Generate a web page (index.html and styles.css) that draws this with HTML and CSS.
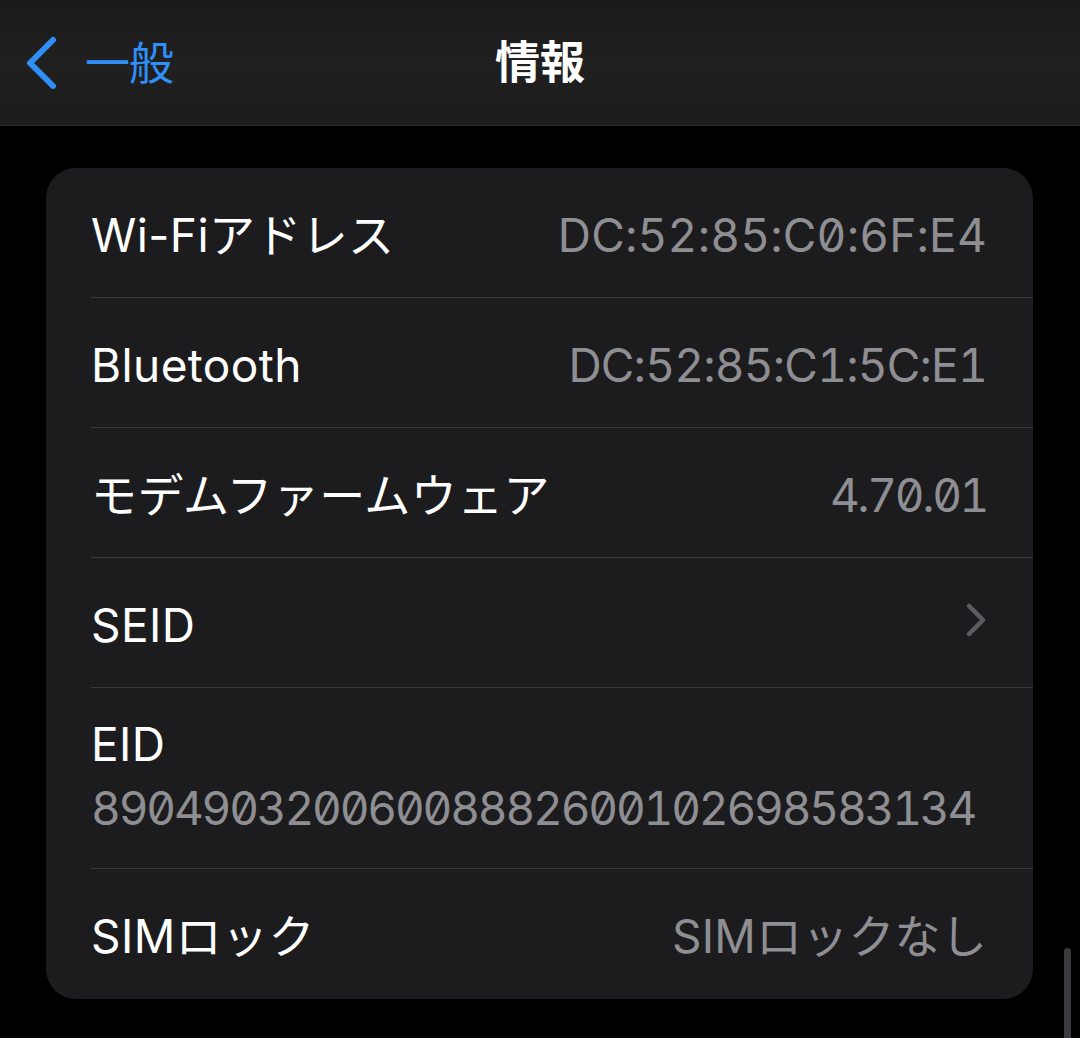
FILE: index.html
```html
<!DOCTYPE html>
<html lang="ja">
<head>
<meta charset="utf-8">
<title>情報</title>
<link rel="stylesheet" href="styles.css">
</head>
<body>
<header class="nav">
  <div class="back">
    <svg class="back-icon" width="40" height="60" viewBox="0 0 40 60">
      <path d="M29 8 L6 31 L29 54" fill="none" stroke="#2f8ff7" stroke-width="6" stroke-linecap="round" stroke-linejoin="round"/>
    </svg>
    <span class="back-label">一般</span>
  </div>
  <div class="title">情報</div>
</header>
<main class="content">
  <section class="card">
    <div class="row">
      <span class="label">Wi-Fiアドレス</span>
      <span class="value">DC:52:85:C0:6F:E4</span>
    </div>
    <div class="row">
      <span class="label">Bluetooth</span>
      <span class="value value-bt">DC:52:85:C1:5C:E1</span>
    </div>
    <div class="row">
      <span class="label">モデムファームウェア</span>
      <span class="value value-num">4.70.01</span>
    </div>
    <div class="row">
      <span class="label">SEID</span>
      <svg class="chev" width="24" height="38" viewBox="0 0 24 38">
        <path d="M5 5 L19 19 L5 33" fill="none" stroke="#5b5b60" stroke-width="4.5" stroke-linecap="round" stroke-linejoin="round"/>
      </svg>
    </div>
    <div class="row row-tall">
      <span class="label">EID</span>
      <span class="value value-block">89049032006008882600102698583134</span>
    </div>
    <div class="row row-last">
      <span class="label">SIMロック</span>
      <span class="value">SIMロックなし</span>
    </div>
  </section>
  <div class="scrollbar"></div>
</main>
</body>
</html>
```
FILE: styles.css
```css
html, body {
  margin: 0;
  padding: 0;
  background: #000;
  width: 1080px;
  height: 1038px;
  overflow: hidden;
}
body {
  font-family: Inter, "Noto Sans CJK JP", sans-serif;
  color: #fff;
  position: relative;
}
.nav {
  height: 125px;
  border-bottom: 1px solid #2b2b2b;
  background: linear-gradient(180deg, #1b1b1b 0%, #202020 50%, #1c1c1c 100%);
  position: relative;
  display: flex;
  align-items: center;
  justify-content: center;
}
.back {
  position: absolute;
  left: 24px;
  top: 32px;
  display: flex;
  align-items: center;
  gap: 21px;
}
.back-icon {
  display: block;
}
.back-label {
  font-family: "Noto Sans CJK JP", sans-serif;
  font-size: 45px;
  font-weight: 400;
  color: #2f8ff7;
  line-height: 60px;
  letter-spacing: -1px;
  margin-top: -3px;
}
.title {
  font-family: "Noto Sans CJK JP", sans-serif;
  font-size: 45px;
  font-weight: 700;
  color: #fff;
  line-height: 60px;
  margin-top: -6px;
}
.content {
  padding-top: 42px;
  padding-left: 46px;
}
.card {
  width: 987px;
  background: #1c1c1e;
  border-radius: 30px;
  overflow: hidden;
}
.row {
  margin-left: 45px;
  padding-left: 0;
  padding-right: 46px;
  height: 129px;
  border-bottom: 1px solid #38383a;
  display: flex;
  align-items: center;
  justify-content: space-between;
  box-sizing: content-box;
}
.row-last {
  border-bottom: none;
  height: 130px;
}
.row-tall {
  height: 172px;
  padding-bottom: 8px;
  flex-direction: column;
  align-items: flex-start;
  justify-content: center;
}
.label {
  font-size: 46px;
  line-height: 64px;
  color: #fff;
  letter-spacing: 0.4px;
  margin-top: 4px;
  margin-left: 0;
}
.value {
  font-size: 46px;
  line-height: 64px;
  color: #8e8e93;
  font-feature-settings: "zero" 1, "tnum" 1;
  letter-spacing: 0.2px;
  margin-top: 4px;
}
.value-bt {
  letter-spacing: -0.8px;
}
.value-num {
  letter-spacing: -2.4px;
}
.value-block {
  margin-top: 0;
  margin-left: 0;
  letter-spacing: -2.2px;
}
.chev {
  display: block;
  margin-right: -1px;
  margin-top: -6px;
}
.scrollbar {
  position: absolute;
  right: 9px;
  top: 948px;
  width: 7px;
  height: 100px;
  border-radius: 4px;
  background: #3a3a3c;
}
```
